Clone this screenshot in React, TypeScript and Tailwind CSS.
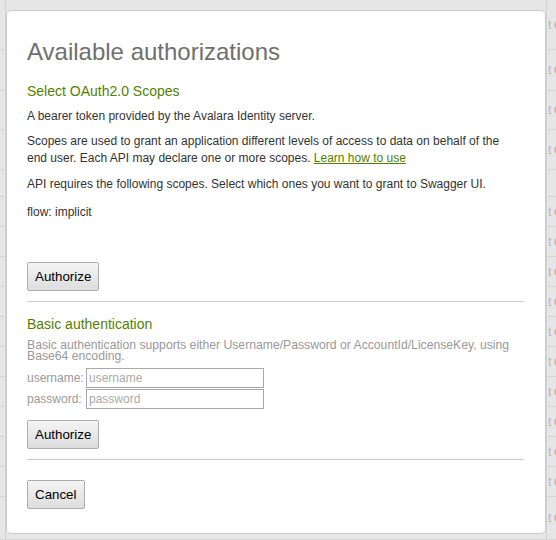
import React from 'react';

const rows = [50, 41, 39, 40, 27, 30, 30, 30, 30, 30, 30, 30, 30, 30, 30, 43];
const emptyRows = [4];

const AuthButton: React.FC<{ label: string }> = ({ label }) => (
  <button className="h-[29px] px-[7px] text-[13.33px] leading-[16px] text-black border border-[#adadad] rounded-[2px] bg-linear-to-b from-[#f4f4f4] to-[#dddddd]">
    {label}
  </button>
);

export default function App() {
  return (
    <div className="relative w-[556px] h-[540px] overflow-hidden bg-[#e6e6e6] font-['Liberation_Sans',Arial,sans-serif]">
      {/* page behind the overlay */}
      <div className="flex flex-col">
        {rows.map((h, i) => (
          <div key={i} className="flex shrink-0 border-b border-[#d6d6d6]" style={{ height: h }}>
            <div className="w-[5px] shrink-0" />
            <div className="w-[542px] shrink-0 border-x border-[#d2d2d2]" />
            {!emptyRows.includes(i) && (
              <div className="flex items-center gap-[3px] pl-[1px] text-[12px] leading-none">
                <span className="text-[#a4badd]">t</span>
                <span className="w-[8px] h-[8px] rounded-full border-2 border-[#ddb995]" />
              </div>
            )}
          </div>
        ))}
      </div>

      {/* dialog */}
      <div className="absolute left-[6px] top-[10px] w-[540px] bg-white border border-[#cccccc] rounded-[5px] pl-[20px] pr-[23px] pt-[20px] pb-[24px]">
        <h2 className="pt-[7px] text-[24px] leading-[28px] text-[#6f6f6f]">Available authorizations</h2>

        <div className="-mr-[2px] pb-[10px] border-b border-[#cccccc]">
          <h3 className="mt-[17px] text-[14px] leading-[16px] text-[#547f00]">Select OAuth2.0 Scopes</h3>
          <div className="pr-[2px] text-[12px] leading-[17px] text-[#333333]">
            <p className="mt-[9px]">A bearer token provided by the Avalara Identity server.</p>
            <p className="mt-[8px]">
              Scopes are used to grant an application different levels of access to data on behalf of the end user. Each API may declare one or more scopes.{' '}
              <a className="text-[#547f00] underline">Learn how to use</a>
            </p>
            <p className="mt-[9px]">API requires the following scopes. Select which ones you want to grant to Swagger UI.</p>
            <p className="mt-[11px]">flow: implicit</p>
          </div>
          <div className="mt-[41px]">
            <AuthButton label="Authorize" />
          </div>
        </div>

        <div className="-mr-[2px] pb-[10px] border-b border-[#cccccc]">
          <h3 className="mt-[14px] text-[14px] leading-[16px] text-[#547f00]">Basic authentication</h3>
          <p className="mt-[8px] text-[12.2px] leading-[11px] text-[#999999]">
            Basic authentication supports either Username/Password or AccountId/LicenseKey, using Base64 encoding.
          </p>
          <div className="mt-[6px] flex flex-col gap-[1px] text-[12px] text-[#999999]">
            <div className="flex items-center h-[20px]">
              <span className="w-[59px]">username:</span>
              <input
                placeholder="username"
                className="w-[178px] h-[20px] border border-[#a9a9a9] px-[2px] text-[12px] placeholder:text-[#aaaaaa] outline-none"
              />
            </div>
            <div className="flex items-center h-[20px]">
              <span className="w-[59px]">password:</span>
              <input
                placeholder="password"
                className="w-[178px] h-[20px] border border-[#a9a9a9] px-[2px] text-[12px] placeholder:text-[#aaaaaa] outline-none"
              />
            </div>
          </div>
          <div className="mt-[11px]">
            <AuthButton label="Authorize" />
          </div>
        </div>

        <div className="mt-[20px]">
          <AuthButton label="Cancel" />
        </div>
      </div>
    </div>
  );
}
